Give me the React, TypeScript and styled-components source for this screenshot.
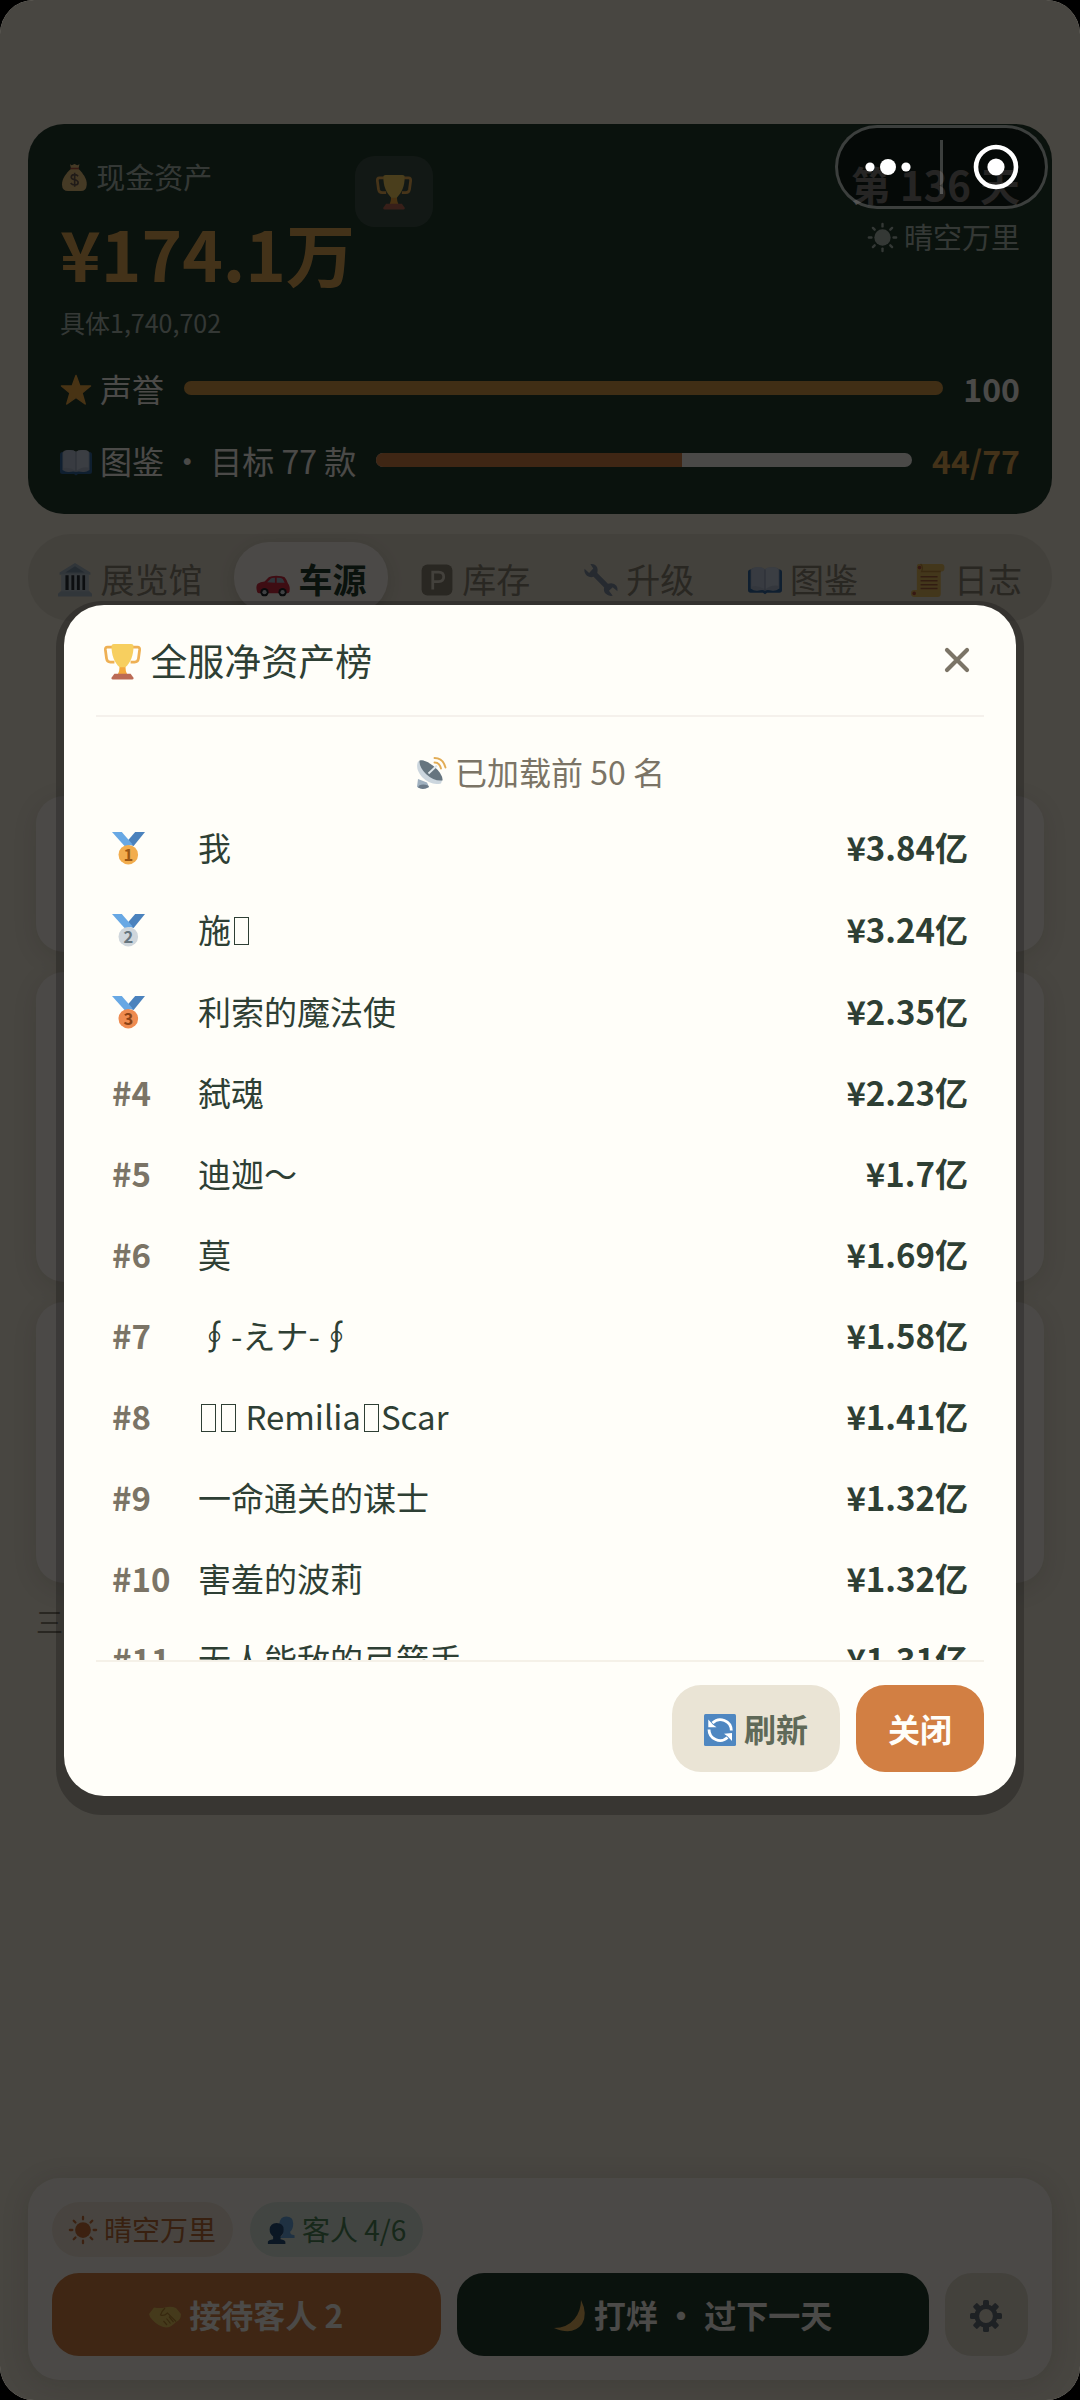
import React from 'react';
import styled, { createGlobalStyle } from 'styled-components';

const Global = createGlobalStyle`
  * { box-sizing: border-box; }
  html { background: #000; }
  body {
    margin: 0;
    background: #000;
    font-family: "Noto Sans CJK SC", "Noto Sans", sans-serif;
    color: #2e3f34;
  }
  button, h1, h2, p, ol { margin: 0; padding: 0; font: inherit; color: inherit; }
  button { border: 0; background: none; cursor: pointer; }
`;

const color = {
  page: '#f0e9d9',
  card: '#fcf6ef',
  forest: '#243c2e',
  gold: '#e2a955',
  goldBar: '#d79b48',
  orange: '#d27f43',
  sand: '#e0d9c9',
  sage: '#adbdb3',
  muted: '#7b7466',
  ink: '#2e3f34',
};

/* ---------- icons ---------- */

const Glyph = styled.svg<{ $solo?: boolean }>`
  width: 1em;
  height: 1em;
  vertical-align: -0.12em;
  margin-right: ${(p) => (p.$solo ? '0' : '0.25em')};
  overflow: visible;
`;

type IconProps = { solo?: boolean };
const box = (p: IconProps) => ({ viewBox: '0 0 32 32', 'aria-hidden': true, $solo: p.solo });

const Trophy = (p: IconProps) => (
  <Glyph {...box(p)}>
    <path d="M7 3.500H3Q1 3.500 1.200 6L2.200 13.500Q2.700 16.500 5.500 16.500H9" fill="none" stroke="#eeb054" strokeWidth="2.400" />
    <path d="M25 3.500H29Q31 3.500 30.800 6L29.800 13.500Q29.300 16.500 26.500 16.500H23" fill="none" stroke="#eeb054" strokeWidth="2.400" />
    <path d="M13.500 20H18.500Q18.500 24 20 27H12Q13.500 24 13.500 20Z" fill="#f3a93c" />
    <path d="M6.500 2.500Q6.500 .8 8.500 .8H23.500Q25.500 .8 25.500 2.500C25.500 11 23 16.500 18.500 21H13.500C9 16.500 6.500 11 6.500 2.500Z" fill="#f7cf5f" />
    <path d="M9 26.500H23L25.500 30Q26 31.500 24.500 31.500H7.500Q6 31.500 6.500 30Z" fill="#bb6a54" />
  </Glyph>
);

const MoneyBag = (p: IconProps) => (
  <Glyph {...box(p)}>
    <path d="M11 1.500L13 2.500L16 1L19 2.500L21.500 1.500L20.500 5.500H12Z" fill="#e8c27e" />
    <path d="M12 6.500H20.500C25 11 30 17 29.500 24Q29 31 23 31H9Q2.500 31 2.200 24C2 17 7 11 12 6.500Z" fill="#e8c27e" />
    <path d="M11.500 6H21" stroke="#b5523f" strokeWidth="1.600" />
    <path d="M20 14.500C18 12 12.500 12.300 12.400 15.700C12.400 19.500 20 17.500 20 21.500C20 25 14 25.200 11.800 22M16.200 10.800V26.300" fill="none" stroke="#6b5a50" strokeWidth="1.800" />
  </Glyph>
);

const Star = (p: IconProps) => (
  <Glyph {...box(p)}>
    <path d="M16 1.500L19.800 12H30.500L22 19L25.200 30L16 23.500L6.800 30L10 19L1.500 12H12.200Z" fill="#f0ab45" stroke="#f0ab45" strokeWidth="1.500" strokeLinejoin="round" />
  </Glyph>
);

const Book = (p: IconProps) => (
  <Glyph {...box(p)}>
    <path d="M2.500 6H29.500Q32 6 32 8.500V25.500Q32 28 29.500 28H18L16 29.500L14 28H2.500Q0 28 0 25.500V8.500Q0 6 2.500 6Z" fill="#3568a0" />
    <path d="M2.500 24V7Q3 4 9 4Q14.500 4 16 6Q17.500 4 23 4Q29 4 29.500 7V24Q26 26.500 23 26Q18 25 16 26Q14 25 9 26Q6 26.500 2.500 24Z" fill="#aebace" />
    <path d="M16 6Q17.500 4 23 4Q27.500 4 28.500 6V21.500Q22 20 16 25Z" fill="#c6cfdf" />
    <path d="M3.500 7Q4.500 4 9 4Q14.500 4 16 6V25Q10 20.500 3.500 22Z" fill="#bdc7d9" />
    <path d="M16 6V26" stroke="#8d9bb3" strokeWidth="1" />
  </Glyph>
);

const Sun = ({ solo, fill }: IconProps & { fill: string }) => (
  <Glyph {...box({ solo })}>
    <circle cx="16" cy="16" r="9" fill={fill} />
    {[0, 45, 90, 135, 180, 225, 270, 315].map((a) => (
      <path key={a} d="M16 1V3.800" stroke={fill} strokeWidth="2.600" strokeLinecap="round" transform={`rotate(${a} 16 16)`} />
    ))}
  </Glyph>
);

const Museum = (p: IconProps) => (
  <Glyph {...box(p)}>
    <path d="M16 0L30.500 9V11H1.500V9Z" fill="#a3b4c3" />
    <path d="M16 3L25 9H7Z" fill="#7b8fa3" />
    <path d="M3 11H29V27H3Z" fill="#b4c2cd" />
    <path d="M7 11.500H10V25.500H7ZM12.600 11.500H15.300V25.500H12.600ZM17.800 11.500H20.500V25.500H17.800ZM23 11.500H25.500V25.500H23Z" fill="#2a2f36" />
    <path d="M2.500 26.500H29.500L32 29V31.500H0V29Z" fill="#a3b4c3" />
  </Glyph>
);

const Car = (p: IconProps) => (
  <Glyph {...box(p)}>
    <path d="M1 27Q-.5 22 1.500 19.500Q4 18 8 17.500L12 13.500Q14 12 19 12Q25 12 27 13.500Q29 16 30 19Q32.500 22 31.500 27Q31 28.500 29 28.500H3Q1.500 28.500 1 27Z" fill="#d02c42" />
    <path d="M10.500 18L14 14.500Q15 13.800 17.800 13.800V18.500ZM19.500 13.800Q24 13.600 25.200 15L27 18.500H19.500Z" fill="#9fb3c4" />
    <circle cx="8" cy="27.500" r="3.900" fill="#20262b" /><circle cx="8" cy="27.500" r="2" fill="#d3dbe1" />
    <circle cx="25" cy="27.500" r="3.900" fill="#20262b" /><circle cx="25" cy="27.500" r="2" fill="#d3dbe1" />
  </Glyph>
);

const Parking = (p: IconProps) => (
  <Glyph {...box(p)}>
    <rect x="1.500" y="1.500" width="29" height="29" rx="5.500" fill="#8a8272" />
    <path d="M12 25V8.500H17.500Q22.300 8.500 22.300 13Q22.300 17.500 17.500 17.500H12" fill="none" stroke="#e0d9c9" strokeWidth="2.600" />
  </Glyph>
);

const Wrench = (p: IconProps) => (
  <Glyph {...box(p)}>
    <path d="M6 1Q11 .5 12.500 4.500Q13.300 7 12.500 9.500L22.500 19.500Q28 18 30.500 21.500Q32 23.500 31.500 26.500L27 22.800L23.500 26L27 30.800Q23 31.500 20.500 29Q18 26.500 19 23L9 13Q5.500 14 2.800 12Q-.2 9.500 .5 5.500L4.800 9.300L8.700 5.200Z" fill="#7f8da0" />
  </Glyph>
);

const Scroll = (p: IconProps) => (
  <Glyph {...box(p)}>
    <path d="M7 1H29Q31.500 1 31.500 4.500Q31.500 8 29 8H28V29Q28 32 25 32H3Q0 32 0 28.500Q0 25.500 3 25.500H5.500V4Q5.500 1 7 1Z" fill="#e2b75c" />
    <path d="M28 8H10Q12 4 9 1" fill="none" stroke="#c08d3e" strokeWidth="1.200" />
    <circle cx="8" cy="4.300" r="1.700" fill="#b5523f" />
    <circle cx="3" cy="28.600" r="1.700" fill="#b5523f" />
    <path d="M9 13H25M9 16.700H25M9 20.400H25M9 24H25" stroke="#a9623d" strokeWidth="1.500" />
  </Glyph>
);

const Satellite = (p: IconProps) => (
  <Glyph {...box(p)}>
    <path d="M3 22L12 25.500L14 30Q8 33 2 30Z" fill="#9fb0bf" />
    <path d="M4 28.500Q8 26.500 13 28.500L14 30Q8 33.500 3 30.500Z" fill="#6b7a88" />
    <path d="M3 4.500Q0 12 7 20Q16 29 26 26.500L27.500 22L8 3Z" fill="#ccd6de" />
    <path d="M4.500 3.500Q10 2.500 18.500 9Q28 17 27.500 23.500Q19 24.500 11 17Q4 10 4.500 3.500Z" fill="#66757f" />
    <path d="M13.500 16.500L22 8.500" stroke="#dfe6ea" strokeWidth="1.800" />
    <path d="M19.500 5.500Q24.500 5.500 26 11.500M19.500 1Q28 1 30.500 10.500" fill="none" stroke="#e2ac55" strokeWidth="1.900" strokeLinecap="round" />
  </Glyph>
);

const Refresh = (p: IconProps) => (
  <Glyph {...box(p)}>
    <rect width="32" height="32" rx="1.500" fill="#4f87c1" />
    <path d="M8.500 9A11 11 0 0 1 27.300 16.500M23.500 23.500A11 11 0 0 1 5 15.500" fill="none" stroke="#fff" strokeWidth="2.800" />
    <path d="M4.300 5.500V13.300H12.500L8.800 10.500ZM28 27V19L20 19.700L23.500 22.300Z" fill="#fff" />
  </Glyph>
);

const Guests = (p: IconProps) => (
  <Glyph {...box(p)}>
    <path d="M13 25Q18 23 18 20Q13.500 17 14 9Q15 .5 22 .5Q30 .5 30 8.500Q30 15 26.500 18Q26 21.500 31.500 22V25Z" fill="#6aa3de" />
    <path d="M1 32V29.500Q1.500 27.500 7 26.500V23.500Q3 20.500 3 15.500Q3.500 8 11 8Q19 8 19 15.500Q19 20.500 15.500 23.500V26.500Q20.500 27.500 21 29.500V32Z" fill="#274d78" />
  </Glyph>
);

const Handshake = (p: IconProps) => (
  <Glyph {...box(p)}>
    <path d="M0 14L5 7.500Q11 8.500 16 7.500Q22 6 27 8L32 14Q32 20 27 22Q22 27.500 17 27.500Q10 27 3.500 20Q.5 17.500 0 14Z" fill="#e8c25c" />
    <path d="M16 8Q12.500 11.500 11.500 15Q15 16.500 18.500 13L27 21.500M14.500 21L18 25M17.500 18.500L21.500 23.500M20 16.500L24.500 22" fill="none" stroke="#b98731" strokeWidth="1.200" />
  </Glyph>
);

const Moon = (p: IconProps) => (
  <Glyph {...box(p)}>
    <path d="M27 0Q34 14 28 24Q19 36 0 28Q13 28 20.500 19Q27 11 27 0Z" fill="#e0b05a" />
  </Glyph>
);

const Gear = (p: IconProps) => (
  <Glyph {...box(p)}>
    {[0, 45, 90, 135, 180, 225, 270, 315].map((a) => (
      <rect key={a} x="13" y="0" width="6" height="8" rx="1.500" fill="#66707a" transform={`rotate(${a} 16 16)`} />
    ))}
    <circle cx="16" cy="16" r="9.200" fill="none" stroke="#66707a" strokeWidth="4.600" />
  </Glyph>
);

const Medal = ({ place }: { place: number }) => {
  const [disc, digit] = [['#f2ad4e', '#9a5714'], ['#cfd6dc', '#66757f'], ['#ef8b50', '#8a4216']][place - 1];
  return (
    <Glyph viewBox="0 0 32 32" role="img" aria-label={`第 ${place} 名`}>
      <path d="M32 0L21 13.500L13 11L22.500 0Z" fill="#4b82bd" />
      <path d="M0 0H9.500L20 12L13 14.500Z" fill="#68a8e4" />
      <circle cx="15.800" cy="22" r="9.500" fill={disc} />
      <text x="15.800" y="28" textAnchor="middle" fontSize="16" fontWeight="700" fill={digit}>{place}</text>
    </Glyph>
  );
};

/* ---------- game screen ---------- */

const Screen = styled.div`
  position: relative;
  display: flex;
  flex-direction: column;
  min-height: 100vh;
  padding: 124px 28px 20px;
  overflow: hidden;
  border-radius: 34px;
  background: ${color.page};
`;

const Summary = styled.header`
  padding: 32px;
  border-radius: 36px;
  background: ${color.forest};
  color: #fcf8f2;
`;

const SummaryTop = styled.div`
  display: flex;
  align-items: flex-start;
  margin-bottom: 26px;
`;

const Caption = styled.div`
  font-size: 29px;
  line-height: 40px;
  color: ${color.sage};
`;

const Cash = styled.p`
  margin-top: 14px;
  font-size: 69px;
  font-weight: 700;
  line-height: 84px;
  color: ${color.gold};
`;

const Exact = styled.p`
  margin-top: 10px;
  font-size: 25px;
  line-height: 36px;
  color: ${color.sage};
`;

const TrophyButton = styled.button`
  display: grid;
  place-items: center;
  width: 78px;
  height: 71px;
  border-radius: 20px;
  background: rgba(255, 255, 255, 0.12);
  font-size: 36px;
`;

const Today = styled.div`
  margin-left: auto;
  text-align: right;
`;

const DayCount = styled.h1`
  margin-bottom: 4px;
  font-size: 40px;
  font-weight: 700;
  line-height: 56px;
`;

const Meters = styled.div`
  display: grid;
  gap: 28px;
`;

const Meter = styled.div`
  display: flex;
  align-items: center;
  gap: 20px;
  font-size: 32px;
  line-height: 44px;
  white-space: nowrap;
`;

const Track = styled.div`
  flex: 1;
  height: 14px;
  overflow: hidden;
  border-radius: 7px;
  background: #f8f4ef;
`;

const Fill = styled.div<{ $tone: string }>`
  height: 100%;
  background: ${(p) => p.$tone};
`;

const MeterValue = styled.strong<{ $tone?: string }>`
  color: ${(p) => p.$tone ?? 'inherit'};
`;

const Tabs = styled.nav`
  display: flex;
  justify-content: space-between;
  margin-top: 20px;
  padding: 8px;
  border-radius: 43px;
  background: ${color.sand};
`;

const Tab = styled.button<{ $active?: boolean }>`
  padding: 3px 22px 0;
  border-radius: 35px;
  font-size: 34px;
  line-height: 68px;
  font-weight: ${(p) => (p.$active ? 700 : 400)};
  color: ${(p) => (p.$active ? color.forest : '#8a8272')};
  background: ${(p) => (p.$active ? color.card : 'none')};
  box-shadow: ${(p) => (p.$active ? '0 4px 16px rgba(60, 50, 30, 0.14)' : 'none')};
  white-space: nowrap;
`;

const Market = styled.main`
  display: flex;
  flex-direction: column;
  gap: 20px;
  padding: 175px 8px 0;
`;

const MarketCard = styled.section<{ $height: number }>`
  height: ${(p) => p.$height}px;
  border-radius: 28px;
  background: ${color.card};
  box-shadow: 0 6px 24px rgba(60, 50, 30, 0.12);
`;

const MarketNote = styled.p`
  font-size: 27px;
  line-height: 38px;
  color: #8a8272;
`;

const Dock = styled.footer`
  display: grid;
  gap: 16px;
  margin-top: auto;
  padding: 24px;
  border-radius: 32px;
  background: ${color.card};
  box-shadow: 0 4px 28px rgba(60, 50, 30, 0.14);
`;

const Chips = styled.div`
  display: flex;
  gap: 17px;
`;

const Chip = styled.span<{ $bg: string; $fg: string }>`
  padding: 0 17px;
  border-radius: 28px;
  font-size: 28px;
  line-height: 55px;
  background: ${(p) => p.$bg};
  color: ${(p) => p.$fg};
`;

const Actions = styled.div`
  display: grid;
  grid-template-columns: 14fr 17fr 83px;
  gap: 16px;
`;

const Action = styled.button<{ $bg: string }>`
  border-radius: 27px;
  font-size: 32px;
  font-weight: 700;
  line-height: 83px;
  color: #fcf8f2;
  background: ${(p) => p.$bg};
`;

/* ---------- overlay, dialog, capsule ---------- */

const Backdrop = styled.div`
  position: fixed;
  inset: 0;
  display: flex;
  align-items: center;
  justify-content: center;
  padding: 16px 56px 0;
  border-radius: 34px;
  background: rgba(0, 0, 0, 0.7);
`;

const Frame = styled.div`
  flex: 1;
  padding: 4px 8px 19px;
  border-radius: 46px;
  background: rgba(0, 0, 0, 0.23);
`;

const Panel = styled.section`
  padding: 0 32px 24px;
  border-radius: 40px;
  background: #fffef9;
`;

const PanelHead = styled.header`
  display: flex;
  align-items: center;
  justify-content: space-between;
  height: 112px;
  padding: 0 6px 0 8px;
  border-bottom: 2px solid #f5f1ec;
`;

const PanelTitle = styled.h2`
  font-size: 37px;
  font-weight: 400;
  line-height: 52px;
`;

const CloseIcon = styled.button`
  display: grid;
  place-items: center;
  width: 42px;
  height: 42px;
`;

const Scroller = styled.div`
  height: 943px;
  overflow-y: auto;
  scrollbar-width: none;
`;

const Status = styled.p`
  padding: 31px 0 12px;
  text-align: center;
  font-size: 32px;
  line-height: 46px;
  color: ${color.muted};
`;

const Board = styled.ol`
  list-style: none;
  font-size: 33px;
`;

const Entry = styled.li<{ $medal: boolean }>`
  display: grid;
  grid-template-columns: 86px 1fr auto;
  padding: 0 16px;
  line-height: ${(p) => (p.$medal ? 82 : 81)}px;
`;

const Rank = styled.strong`
  color: ${color.muted};
`;

const Tofu = styled.span`
  display: inline-block;
  width: 15px;
  height: 28px;
  margin: 0 2px 0 3px;
  border: 1px solid currentColor;
  vertical-align: -2px;
`;

const PanelFoot = styled.footer`
  display: flex;
  justify-content: flex-end;
  gap: 16px;
  padding-top: 23px;
  border-top: 2px solid #f5f1e8;
`;

const FootButton = styled.button<{ $primary?: boolean }>`
  padding: 0 32px;
  border-radius: 29px;
  font-size: 32px;
  font-weight: 700;
  line-height: 87px;
  color: ${(p) => (p.$primary ? '#fffef9' : '#5f6958')};
  background: ${(p) => (p.$primary ? color.orange : '#eae4d5')};
`;

const Capsule = styled.div`
  position: fixed;
  top: 125px;
  right: 32px;
  display: flex;
  align-items: center;
  gap: 3px;
  width: 213px;
  height: 84px;
  border: 3px solid rgba(255, 255, 255, 0.22);
  border-radius: 42px;
  background: rgba(0, 0, 0, 0.5);
`;

const CapsuleButton = styled.button`
  display: grid;
  place-items: center;
  flex: 1;
  height: 100%;
`;

const CapsuleRule = styled.span`
  width: 3px;
  height: 54px;
  background: rgba(255, 255, 255, 0.22);
`;

/* ---------- data ---------- */

const board: { name: React.ReactNode; worth: string }[] = [
  { name: '我', worth: '¥3.84亿' },
  { name: <>施<Tofu /></>, worth: '¥3.24亿' },
  { name: '利索的魔法使', worth: '¥2.35亿' },
  { name: '弑魂', worth: '¥2.23亿' },
  { name: '迪迦～', worth: '¥1.7亿' },
  { name: '莫', worth: '¥1.69亿' },
  { name: '∮-えナ-∮', worth: '¥1.58亿' },
  { name: <><Tofu /><Tofu /> Remilia<Tofu />Scar</>, worth: '¥1.41亿' },
  { name: '一命通关的谋士', worth: '¥1.32亿' },
  { name: '害羞的波莉', worth: '¥1.32亿' },
  { name: '无人能敌的弓箭手', worth: '¥1.31亿' },
];

const collected = 44;
const target = 77;

export default function App() {
  return (
    <>
      <Global />
      <Screen>
        <Summary>
          <SummaryTop>
            <div>
              <Caption><MoneyBag />现金资产</Caption>
              <Cash>¥174.1万</Cash>
              <Exact>具体1,740,702</Exact>
            </div>
            <TrophyButton aria-label="排行榜"><Trophy solo /></TrophyButton>
            <Today>
              <DayCount>第 136 天</DayCount>
              <Caption><Sun fill={color.sage} />晴空万里</Caption>
            </Today>
          </SummaryTop>
          <Meters>
            <Meter>
              <span><Star />声誉</span>
              <Track><Fill $tone={color.goldBar} style={{ width: '100%' }} /></Track>
              <MeterValue>100</MeterValue>
            </Meter>
            <Meter>
              <span><Book />图鉴 · 目标 {target} 款</span>
              <Track><Fill $tone={color.orange} style={{ width: `${(collected / target) * 100}%` }} /></Track>
              <MeterValue $tone={color.gold}>{collected}/{target}</MeterValue>
            </Meter>
          </Meters>
        </Summary>

        <Tabs>
          <Tab><Museum />展览馆</Tab>
          <Tab $active><Car />车源</Tab>
          <Tab><Parking />库存</Tab>
          <Tab><Wrench />升级</Tab>
          <Tab><Book />图鉴</Tab>
          <Tab><Scroll />日志</Tab>
        </Tabs>

        <Market>
          <MarketCard $height={156} />
          <MarketCard $height={310} />
          <MarketCard $height={281} />
          <MarketNote>三</MarketNote>
        </Market>

        <Dock>
          <Chips>
            <Chip $bg="#f1e5d5" $fg="#bd6c36"><Sun fill="#c8703a" />晴空万里</Chip>
            <Chip $bg="#dce8dc" $fg="#4f8558"><Guests />客人 4/6</Chip>
          </Chips>
          <Actions>
            <Action $bg={color.orange}><Handshake />接待客人 2</Action>
            <Action $bg={color.forest}><Moon />打烊 · 过下一天</Action>
            <Action $bg={color.sand} aria-label="设置"><Gear solo /></Action>
          </Actions>
        </Dock>
      </Screen>

      <Backdrop>
        <Frame>
          <Panel role="dialog" aria-modal="true" aria-labelledby="board-title">
            <PanelHead>
              <PanelTitle id="board-title"><Trophy />全服净资产榜</PanelTitle>
              <CloseIcon aria-label="关闭">
                <svg width="26" height="26" viewBox="0 0 26 26" aria-hidden="true">
                  <path d="M3 3L23 23M23 3L3 23" stroke={color.muted} strokeWidth="4.200" strokeLinecap="round" />
                </svg>
              </CloseIcon>
            </PanelHead>
            <Scroller>
              <Status><Satellite />已加载前 50 名</Status>
              <Board>
                {board.map((row, i) => (
                  <Entry key={i} $medal={i < 3}>
                    <Rank>{i < 3 ? <Medal place={i + 1} /> : `#${i + 1}`}</Rank>
                    <span>{row.name}</span>
                    <strong>{row.worth}</strong>
                  </Entry>
                ))}
              </Board>
            </Scroller>
            <PanelFoot>
              <FootButton><Refresh />刷新</FootButton>
              <FootButton $primary>关闭</FootButton>
            </PanelFoot>
          </Panel>
        </Frame>
      </Backdrop>

      <Capsule>
        <CapsuleButton aria-label="更多">
          <svg width="46" height="18" viewBox="0 0 46 18" aria-hidden="true" fill="#fff">
            <circle cx="5" cy="9" r="4.600" /><circle cx="23" cy="9" r="8" /><circle cx="41" cy="9" r="4.600" />
          </svg>
        </CapsuleButton>
        <CapsuleRule />
        <CapsuleButton aria-label="退出">
          <svg width="46" height="46" viewBox="0 0 46 46" aria-hidden="true">
            <circle cx="23" cy="23" r="20" fill="none" stroke="#fff" strokeWidth="4.600" />
            <circle cx="23" cy="23" r="8.600" fill="#fff" />
          </svg>
        </CapsuleButton>
      </Capsule>
    </>
  );
}
